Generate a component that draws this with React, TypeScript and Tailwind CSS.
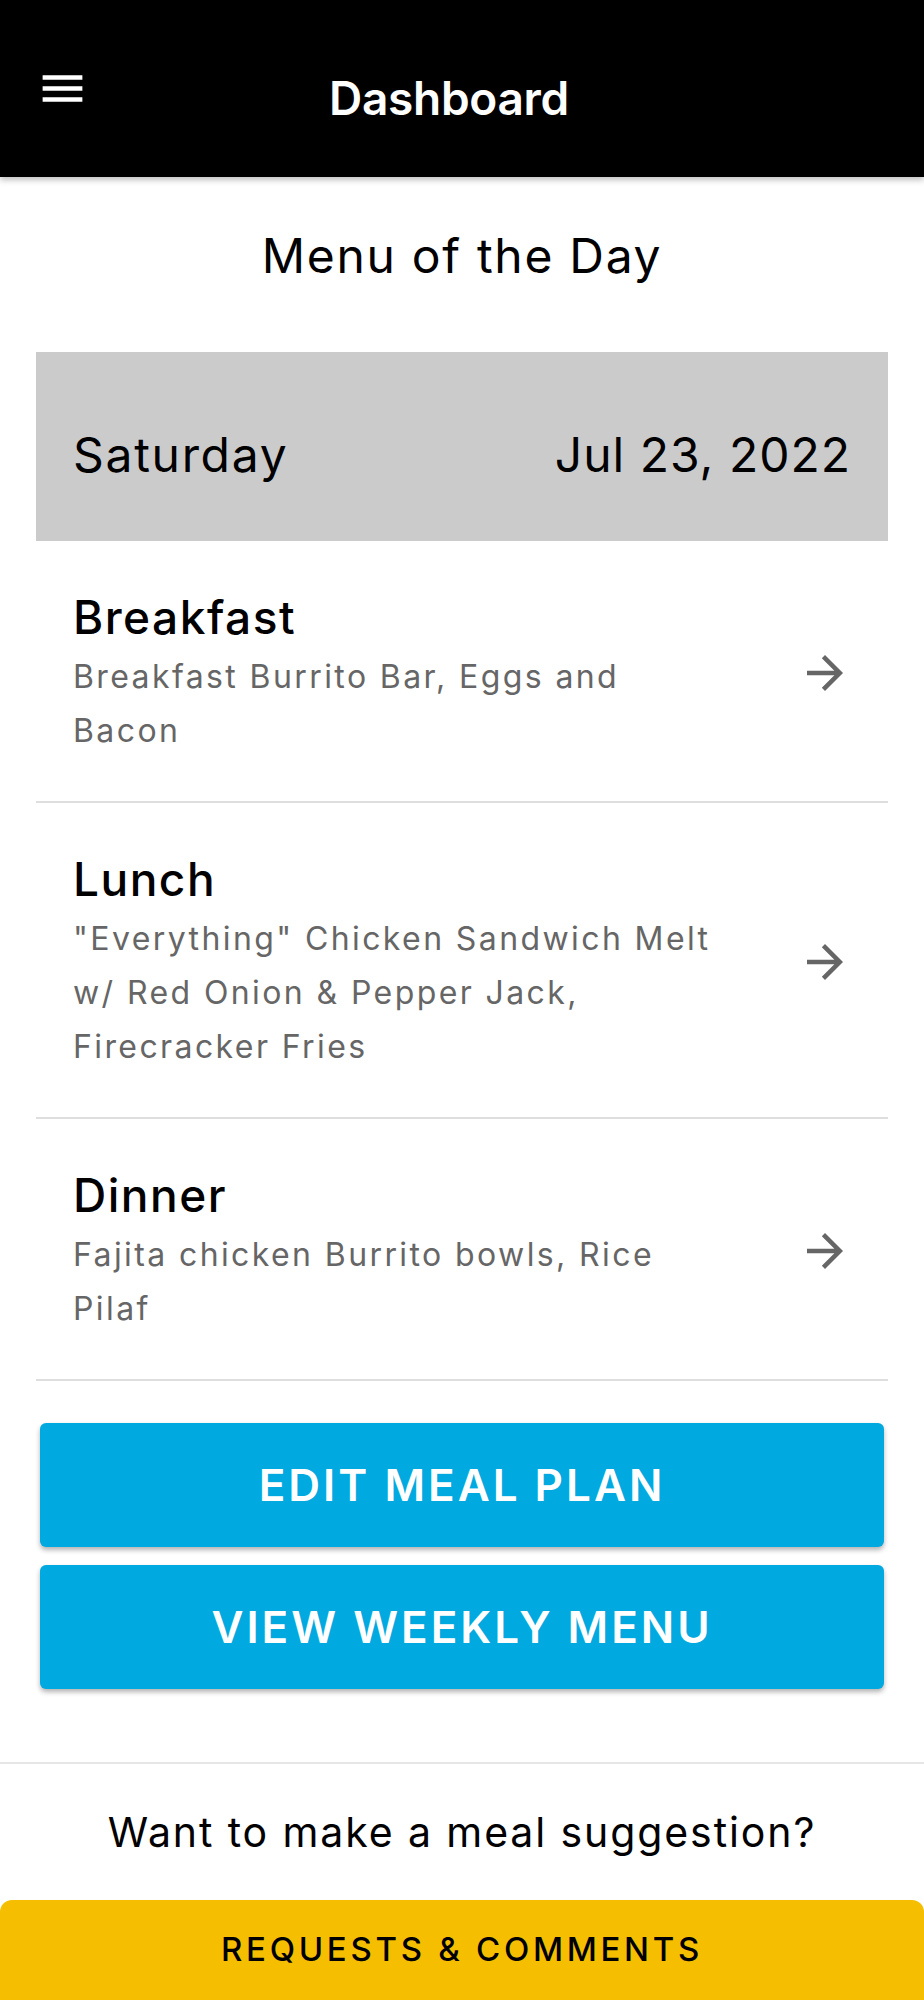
const meals = [
  { id: 'breakfast', name: 'Breakfast', lines: ['Breakfast Burrito Bar, Eggs and', 'Bacon'] },
  {
    id: 'lunch',
    name: 'Lunch',
    lines: ['"Everything" Chicken Sandwich Melt', 'w/ Red Onion & Pepper Jack,', 'Firecracker Fries'],
  },
  { id: 'dinner', name: 'Dinner', lines: ['Fajita chicken Burrito bowls, Rice', 'Pilaf'] },
];

function MenuIcon() {
  return (
    <svg viewBox="0 0 24 24" className="h-[53px] w-[53px] fill-white">
      <path d="M3 18h18v-2H3v2zm0-5h18v-2H3v2zm0-7v2h18V6H3z" />
    </svg>
  );
}

function ArrowIcon() {
  return (
    <svg viewBox="0 0 24 24" className="h-[54px] w-[54px] shrink-0 fill-[#666666]">
      <path d="M12 4l-1.41 1.41L16.17 11H4v2h12.17l-5.58 5.59L12 20l8-8z" />
    </svg>
  );
}

export default function App() {
  return (
    <div className="flex min-h-[2000px] flex-col bg-white font-['Inter',sans-serif] text-black">
      <header className="relative z-10 grid h-[177px] grid-cols-[89px_1fr_115px] bg-black shadow-[0_3px_6px_rgba(0,0,0,0.25)]">
        <div className="pl-[36px] pt-[62px]">
          <MenuIcon />
        </div>
        <h1 className="pt-[70px] text-center text-[46px] font-semibold leading-[56px] tracking-[-0.3px] text-white">
          Dashboard
        </h1>
        <div />
      </header>

      <main className="flex-1 px-[36px]">
        <h2 className="pt-[50px] pb-[67px] text-center text-[48px] leading-[58px] tracking-[1.7px]">Menu of the Day</h2>

        <div className="flex h-[189px] items-center justify-between bg-[#cbcbcb] px-[37px] pt-[16px] text-[48px] leading-[58px]">
          <span className="tracking-[1.7px]">Saturday</span>
          <span className="tracking-[1px]">Jul 23, 2022</span>
        </div>

        <ul>
          {meals.map((meal) => (
            <li
              key={meal.id}
              className="flex items-center border-b-2 border-[#dedede] pl-[37px] pr-[36px] pt-[47px] pb-[43px]"
            >
              <div className="flex-1">
                <h3 className="text-[46px] font-medium leading-[58px] tracking-[1.5px]">{meal.name}</h3>
                <p className="mt-[4px] text-[32px] leading-[54px] tracking-[2.4px] text-[#666666]">
                  {meal.lines.map((line) => (
                    <span key={line} className="block whitespace-nowrap">
                      {line}
                    </span>
                  ))}
                </p>
              </div>
              <ArrowIcon />
            </li>
          ))}
        </ul>

        <div className="flex flex-col gap-[18px] px-[4px] pt-[42px] pb-[72px]">
          <button className="h-[124px] rounded-[6px] bg-[#00a9e0] text-[44px] font-semibold tracking-[3px] text-white shadow-[0_3px_5px_rgba(0,0,0,0.3)]">
            EDIT MEAL PLAN
          </button>
          <button className="h-[124px] rounded-[6px] bg-[#00a9e0] text-[44px] font-semibold tracking-[3px] text-white shadow-[0_3px_5px_rgba(0,0,0,0.3)]">
            VIEW WEEKLY MENU
          </button>
        </div>
      </main>

      <footer className="border-t-2 border-[#e6e6e6] bg-white">
        <p className="pt-[43px] pb-[43px] text-center text-[41px] leading-[50px] tracking-[1.9px]">
          Want to make a meal suggestion?
        </p>
        <button className="h-[100px] w-full rounded-t-[12px] bg-[#f5bf00] text-[33px] font-medium tracking-[3.7px] text-black">
          REQUESTS &amp; COMMENTS
        </button>
      </footer>
    </div>
  );
}
